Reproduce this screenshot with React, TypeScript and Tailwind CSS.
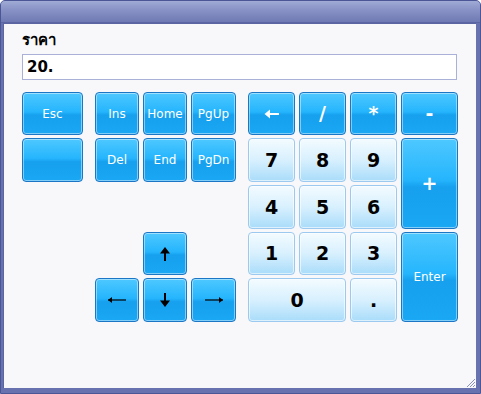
import React from "react";

const blue =
  "rounded-[4px] border border-[#1c76c6] shadow-[inset_0_0_0_1px_rgba(255,255,255,0.45)] bg-[linear-gradient(to_bottom,#4ec8ff_0%,#25b5fd_46%,#16a0ee_54%,#1aa7f3_100%)] text-white flex items-center justify-center";
const light =
  "rounded-[4px] border border-[#9cc9ef] shadow-[inset_0_0_0_1px_rgba(255,255,255,0.6)] bg-[linear-gradient(to_bottom,#f3fbff_0%,#d8f0fe_50%,#a9dcfa_100%)] text-black flex items-center justify-center";

const small = "text-[12px] [font-family:'DejaVu_Sans',sans-serif]";
const big = "text-[19px] font-bold [font-family:'DejaVu_Sans',sans-serif]";

function UpArrow() {
  return (
    <svg width="12" height="16" viewBox="0 0 12 16">
      <path d="M6 1 L11 7.5 L7 7.5 L7 15 L5 15 L5 7.5 L1 7.5 Z" fill="#000" />
    </svg>
  );
}
function DownArrow() {
  return (
    <svg width="12" height="16" viewBox="0 0 12 16">
      <path d="M6 15 L11 8.5 L7 8.5 L7 1 L5 1 L5 8.5 L1 8.5 Z" fill="#000" />
    </svg>
  );
}
function LeftArrow() {
  return (
    <svg width="20" height="10" viewBox="0 0 20 10">
      <path d="M1 5 L19 5" stroke="#000" strokeWidth="1.2" />
      <path d="M1 5 L5 2 L5 8 Z" fill="#000" />
    </svg>
  );
}
function RightArrow() {
  return (
    <svg width="20" height="10" viewBox="0 0 20 10">
      <path d="M1 5 L19 5" stroke="#000" strokeWidth="1.2" />
      <path d="M19 5 L15 2 L15 8 Z" fill="#000" />
    </svg>
  );
}
function BackArrow() {
  return (
    <svg width="16" height="10" viewBox="0 0 16 10">
      <path d="M2 5 L15 5" stroke="#fff" strokeWidth="2" />
      <path d="M0.5 5 L6 0.5 L6 9.5 Z" fill="#fff" />
    </svg>
  );
}

export default function App() {
  return (
    <div className="w-[481px] h-[394px] bg-white">
      <div className="w-[481px] h-[394px] rounded-t-[5px] border border-[#4b5696] bg-[#6772ae] flex flex-col">
        <div className="h-[22px] rounded-t-[4px] bg-[linear-gradient(to_bottom,#a1abd6_0%,#8993c6_40%,#6f7ab4_100%)] border-b border-[#5b66a3]" />
        <div className="flex-1 flex pl-[2px] pr-[4px] pb-[5px]">
          <div className="flex-1 bg-[#f8f8fb] border-l border-t border-[#5a65a2] relative pt-[7px] pl-[18px]">
            <div className="text-[15px] font-bold leading-[19px] text-black [font-family:'DejaVu_Sans','Noto_Sans',Tahoma,sans-serif]">
              ราคา
            </div>
            <div className="mt-[4px] w-[435px] h-[26px] border border-[#a9b1d9] bg-white flex items-center pl-[4px] text-[15px] font-bold text-black [font-family:'DejaVu_Sans',sans-serif]">
              20.
            </div>
            <div className="mt-[12px] grid grid-cols-[61px_4px_44px_44px_45px_4px_47px_47px_47px_57px] grid-rows-[43px_44px_44px_43px_44px] gap-x-[4px] gap-y-[3px]">
              <div className={`${blue} ${small} col-start-1 row-start-1`}>Esc</div>
              <div className={`${blue} col-start-1 row-start-2`} />

              <div className={`${blue} ${small} col-start-3 row-start-1`}>Ins</div>
              <div className={`${blue} ${small} col-start-4 row-start-1`}>Home</div>
              <div className={`${blue} ${small} col-start-5 row-start-1`}>PgUp</div>
              <div className={`${blue} ${small} col-start-3 row-start-2`}>Del</div>
              <div className={`${blue} ${small} col-start-4 row-start-2`}>End</div>
              <div className={`${blue} ${small} col-start-5 row-start-2`}>PgDn</div>

              <div className={`${blue} col-start-4 row-start-4`}><UpArrow /></div>
              <div className={`${blue} col-start-3 row-start-5`}><LeftArrow /></div>
              <div className={`${blue} col-start-4 row-start-5`}><DownArrow /></div>
              <div className={`${blue} col-start-5 row-start-5`}><RightArrow /></div>

              <div className={`${blue} col-start-7 row-start-1`}><BackArrow /></div>
              <div className={`${blue} ${big} col-start-8 row-start-1`}>/</div>
              <div className={`${blue} ${big} col-start-9 row-start-1`}>*</div>
              <div className={`${blue} ${big} col-start-10 row-start-1`}>-</div>

              <div className={`${light} ${big} col-start-7 row-start-2`}>7</div>
              <div className={`${light} ${big} col-start-8 row-start-2`}>8</div>
              <div className={`${light} ${big} col-start-9 row-start-2`}>9</div>
              <div className={`${blue} ${big} col-start-10 row-start-2 row-span-2`}>+</div>

              <div className={`${light} ${big} col-start-7 row-start-3`}>4</div>
              <div className={`${light} ${big} col-start-8 row-start-3`}>5</div>
              <div className={`${light} ${big} col-start-9 row-start-3`}>6</div>

              <div className={`${light} ${big} col-start-7 row-start-4`}>1</div>
              <div className={`${light} ${big} col-start-8 row-start-4`}>2</div>
              <div className={`${light} ${big} col-start-9 row-start-4`}>3</div>
              <div className={`${blue} ${small} col-start-10 row-start-4 row-span-2`}>Enter</div>

              <div className={`${light} ${big} col-start-7 col-span-2 row-start-5`}>0</div>
              <div className={`${light} ${big} col-start-9 row-start-5`}>.</div>
            </div>
            <svg className="absolute right-0 bottom-0" width="12" height="12" viewBox="0 0 12 12">
              <path d="M11 3 L3 11 M11 6 L6 11 M11 9 L9 11" stroke="#8a93c4" strokeWidth="1" />
            </svg>
          </div>
        </div>
      </div>
    </div>
  );
}
